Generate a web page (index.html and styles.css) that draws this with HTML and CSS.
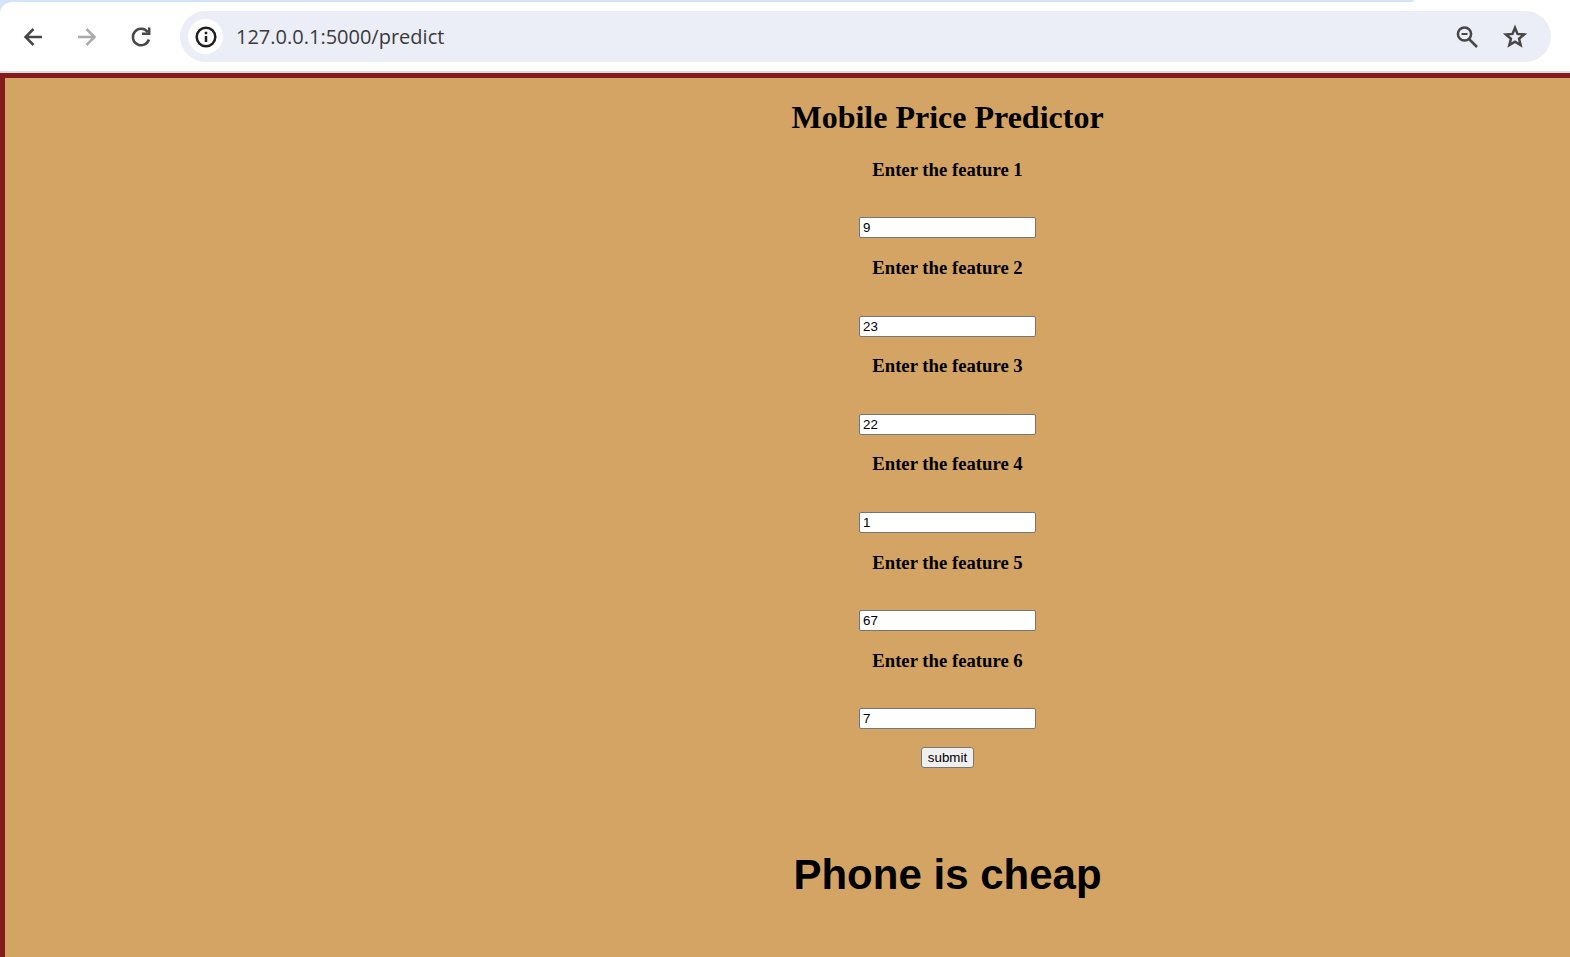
FILE: index.html
```html
<!DOCTYPE html>
<html lang="en">
<head>
<meta charset="utf-8">
<meta name="viewport" content="width=device-width, initial-scale=1">
<title>Mobile Price Predictor</title>
<link rel="stylesheet" href="styles.css">
</head>
<body>
<header class="browser">
  <div class="tab-strip"></div>
  <nav class="toolbar" aria-label="Browser">
    <div class="nav-buttons">
      <button class="icon-button" type="button" aria-label="Back">
        <svg class="icon" viewBox="0 0 28 28"><path d="M23 14H6.500M14.500 6L6.500 14l8 8"/></svg>
      </button>
      <button class="icon-button" type="button" aria-label="Forward" disabled>
        <svg class="icon" viewBox="0 0 28 28"><path d="M5 14h16.500M13.500 6l8 8-8 8"/></svg>
      </button>
      <button class="icon-button" type="button" aria-label="Reload">
        <svg class="icon" viewBox="0 0 28 28"><path d="M21.900 16.500A8.200 8.200 0 1 1 20.700 9.200"/><path d="M15 10.700h7.200V4.500"/></svg>
      </button>
    </div>
    <div class="address-bar">
      <button class="site-info" type="button" aria-label="Site information">
        <svg class="icon" viewBox="0 0 28 28"><circle cx="14" cy="14" r="9.300"/><path d="M14 13v6M14 8.700v2.600"/></svg>
      </button>
      <input class="url" type="text" aria-label="Address" value="127.0.0.1:5000/predict">
      <button class="icon-button" type="button" aria-label="Zoom">
        <svg class="icon" viewBox="0 0 28 28"><circle cx="11.500" cy="11" r="6.600"/><path d="M16 16l8 8"/><path class="thin" d="M8.500 11h6"/></svg>
      </button>
      <button class="icon-button" type="button" aria-label="Bookmark this page">
        <svg class="icon" viewBox="0 0 28 28"><path d="M14 4.800l2.500 6.100 6.600.5-5.050 4.300 1.600 6.400L14 18.600l-5.650 3.500 1.600-6.400L4.900 11.400l6.600-.5z"/></svg>
      </button>
    </div>
  </nav>
</header>
<main class="page">
  <form class="predictor">
    <h1>Mobile Price Predictor</h1>
    <h3><label for="f1">Enter the feature 1</label></h3>
    <input class="field" id="f1" type="text" value="9">
    <h3><label for="f2">Enter the feature 2</label></h3>
    <input class="field" id="f2" type="text" value="23">
    <h3><label for="f3">Enter the feature 3</label></h3>
    <input class="field" id="f3" type="text" value="22">
    <h3><label for="f4">Enter the feature 4</label></h3>
    <input class="field" id="f4" type="text" value="1">
    <h3><label for="f5">Enter the feature 5</label></h3>
    <input class="field" id="f5" type="text" value="67">
    <h3><label for="f6">Enter the feature 6</label></h3>
    <input class="field" id="f6" type="text" value="7">
    <button class="submit" type="submit">submit</button>
    <p class="result">Phone is cheap</p>
  </form>
</main>
</body>
</html>
```
FILE: styles.css
```css
* {
  box-sizing: border-box;
}

body {
  margin: 0;
  min-height: 100vh;
  display: flex;
  flex-direction: column;
  font-family: "Liberation Serif", "Times New Roman", serif;
  color: #000;
}

.browser {
  background: linear-gradient(#d3e3fd, #d3e3fd) left top / 16px 16px no-repeat #fff;
  border-bottom: 2px solid #dddde1;
}

.tab-strip {
  height: 2px;
  margin-right: 156px;
  background: #d3e3fd;
  border-bottom-right-radius: 8px;
}

.toolbar {
  display: flex;
  align-items: center;
  gap: 19px;
  padding: 9px 19px 9px 13px;
  background: #fff;
  border-top-left-radius: 12px;
}

.nav-buttons {
  display: flex;
  gap: 14px;
}

.icon-button,
.site-info {
  display: grid;
  place-items: center;
  flex: none;
  width: 40px;
  height: 40px;
  padding: 0;
  border: 0;
  border-radius: 50%;
  background: none;
  color: #474747;
}

.icon-button:disabled {
  color: #ababab;
}

.icon {
  width: 28px;
  height: 28px;
  fill: none;
  stroke: currentColor;
  stroke-width: 2.5;
}

.icon .thin {
  stroke-width: 2;
}

.address-bar {
  flex: 1;
  display: flex;
  align-items: center;
  gap: 8px;
  height: 51px;
  padding: 0 16px 0 8px;
  border-radius: 26px;
  background: #ebeef7;
}

.site-info {
  width: 35px;
  height: 35px;
  background: #fff;
  color: #1f1f1f;
}

.url {
  flex: 1;
  min-width: 0;
  padding: 0 5px;
  border: 0;
  outline: 0;
  background: none;
  font: 20px/28px "Open Sans", "Noto Sans", sans-serif;
  color: #3a3a3a;
}

.page {
  flex: 1;
  padding-left: 320px;
  border-top: 5px solid #851b1c;
  border-left: 5px solid #851b1c;
  background: #d4a464;
}

.predictor {
  display: flex;
  flex-direction: column;
  align-items: center;
}

h1 {
  margin: 21px 0 23px;
  font-size: 32px;
  line-height: 37px;
}

h3 {
  margin: 1em 0 2em;
  font-size: 1.17em;
  line-height: 21px;
}

h1 + h3 {
  margin-top: 0;
}

.field {
  width: 177px;
  height: 21px;
  padding: 1px 3px;
  border: 1px solid #767676;
  border-radius: 2px;
  background: #fff;
  font-family: "Liberation Sans", Arial, sans-serif;
  color: #000;
}

.submit {
  height: 21px;
  margin-top: 18px;
  padding: 0 6px;
  border: 1px solid #767676;
  border-radius: 3px;
  background: #efefef;
  font-family: "Liberation Sans", Arial, sans-serif;
  color: #000;
}

.result {
  margin: 78px 0 48px;
  font: bold 42px/58px "Liberation Sans", Arial, sans-serif;
}
```
